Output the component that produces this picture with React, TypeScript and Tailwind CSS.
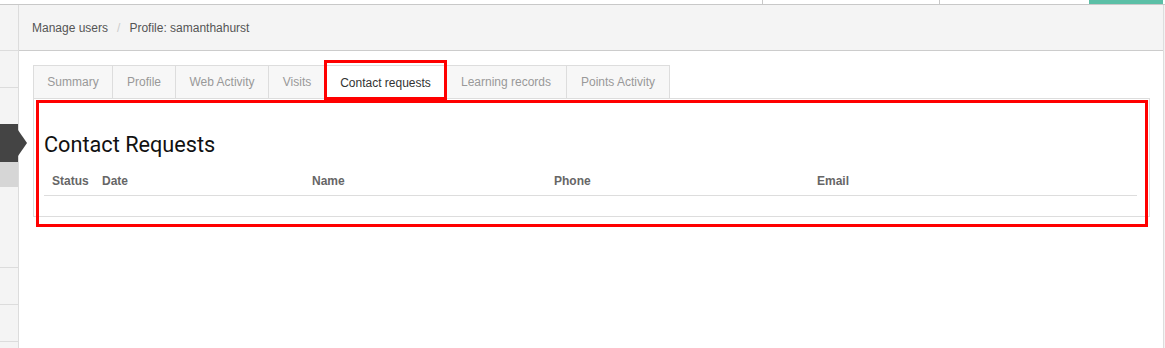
import React from 'react'

const tabs = [
  { label: 'Summary', w: 'w-[80px]' },
  { label: 'Profile', w: 'w-[63px]' },
  { label: 'Web Activity', w: 'w-[93px]' },
  { label: 'Visits', w: 'w-[57px]' },
  { label: 'Contact requests', w: 'w-[120px]', active: true },
  { label: 'Learning records', w: 'w-[121px]' },
  { label: 'Points Activity', w: 'w-[103px]' },
]

const columns = [
  { label: 'Status', w: 'w-[50px]' },
  { label: 'Date', w: 'w-[210px]' },
  { label: 'Name', w: 'w-[242px]' },
  { label: 'Phone', w: 'w-[263px]' },
  { label: 'Email', w: 'flex-1' },
]

function Sidebar() {
  return (
    <aside className="w-[19px] shrink-0 bg-[#f4f4f4] border-r border-[#dcdcdc] flex flex-col">
      <div className="h-[46px] border-b border-[#dcdcdc]" />
      <div className="h-[37px] border-b border-[#dcdcdc]" />
      <div className="h-[36px]" />
      {/* current item */}
      <div className="relative h-[38px] bg-[#444444]">
        <span className="absolute left-full top-1/2 -translate-y-1/2 w-0 h-0 border-y-[13px] border-y-transparent border-l-[9px] border-l-[#444444]" />
      </div>
      <div className="h-[25px] bg-[#d6d6d6]" />
      <div className="h-[81px] border-b border-[#dcdcdc]" />
      <div className="h-[37px] border-b border-[#dcdcdc]" />
      <div className="h-[37px] border-b border-[#dcdcdc]" />
    </aside>
  )
}

function Tabs() {
  return (
    <div className="flex">
      {tabs.map((t, i) => (
        <div
          key={t.label}
          className={`relative h-[34px] ${t.w} flex items-center justify-center border-t border-r border-[#dddddd] text-[12px] ${i === 0 ? 'border-l' : ''} ${
            t.active ? 'bg-white text-[#333333] z-10' : 'bg-[#f7f7f7] text-[#999999] border-b'
          }`}
        >
          {t.label}
          {t.active && (
            <span className="absolute -left-[2px] -right-[2px] -top-[6px] -bottom-[1px] border-[3px] border-[#ff0000]" />
          )}
        </div>
      ))}
    </div>
  )
}

export default function App() {
  return (
    <div className="w-[1165px] h-[348px] overflow-hidden bg-white flex flex-col font-['Liberation_Sans',Arial,sans-serif]">
      {/* top toolbar edge */}
      <div className="h-[5px] shrink-0 flex border-b border-[#c8c8c8]">
        <div className="flex-1" />
        <div className="w-[177px] border-l border-[#c8c8c8]" />
        <div className="w-[150px] border-l border-[#c8c8c8]" />
        <div className="w-[74px] bg-[#5bbfa6]" />
        <div className="w-[2px]" />
      </div>

      <div className="flex flex-1 min-h-0">
        <Sidebar />

        <main className="flex-1 flex flex-col border-r border-[#dddddd]">
          <div className="h-[46px] shrink-0 bg-[#f4f4f4] border-b border-[#cccccc] flex items-center pl-[13px] text-[12px] text-[#555555]">
            <span>Manage users</span>
            <span className="px-[9px] text-[#cccccc]">/</span>
            <span>Profile: samanthahurst</span>
          </div>

          <div className="pl-[14px] pr-[13px] pt-[14px]">
            <Tabs />
            <div className="relative -mt-px border border-[#dddddd] pl-[10px] pr-[12px] pt-[34px] pb-[20px]">
              <h2 className="h-[24px] leading-[24px] text-[21.7px] text-[#111111] font-['Roboto',sans-serif]">
                Contact Requests
              </h2>
              <div className="mt-[9px] h-[30px] flex items-center border-b border-[#dddddd] text-[12px] font-bold text-[#666666]">
                {columns.map((c) => (
                  <div key={c.label} className={`${c.w} px-[8px]`}>
                    {c.label}
                  </div>
                ))}
              </div>
              <span className="absolute left-[2px] right-[1px] top-[1px] -bottom-[11px] border-[3px] border-[#ff0000] pointer-events-none" />
            </div>
          </div>
        </main>

        <div className="w-px bg-[#f3f3f3]" />
      </div>
    </div>
  )
}
